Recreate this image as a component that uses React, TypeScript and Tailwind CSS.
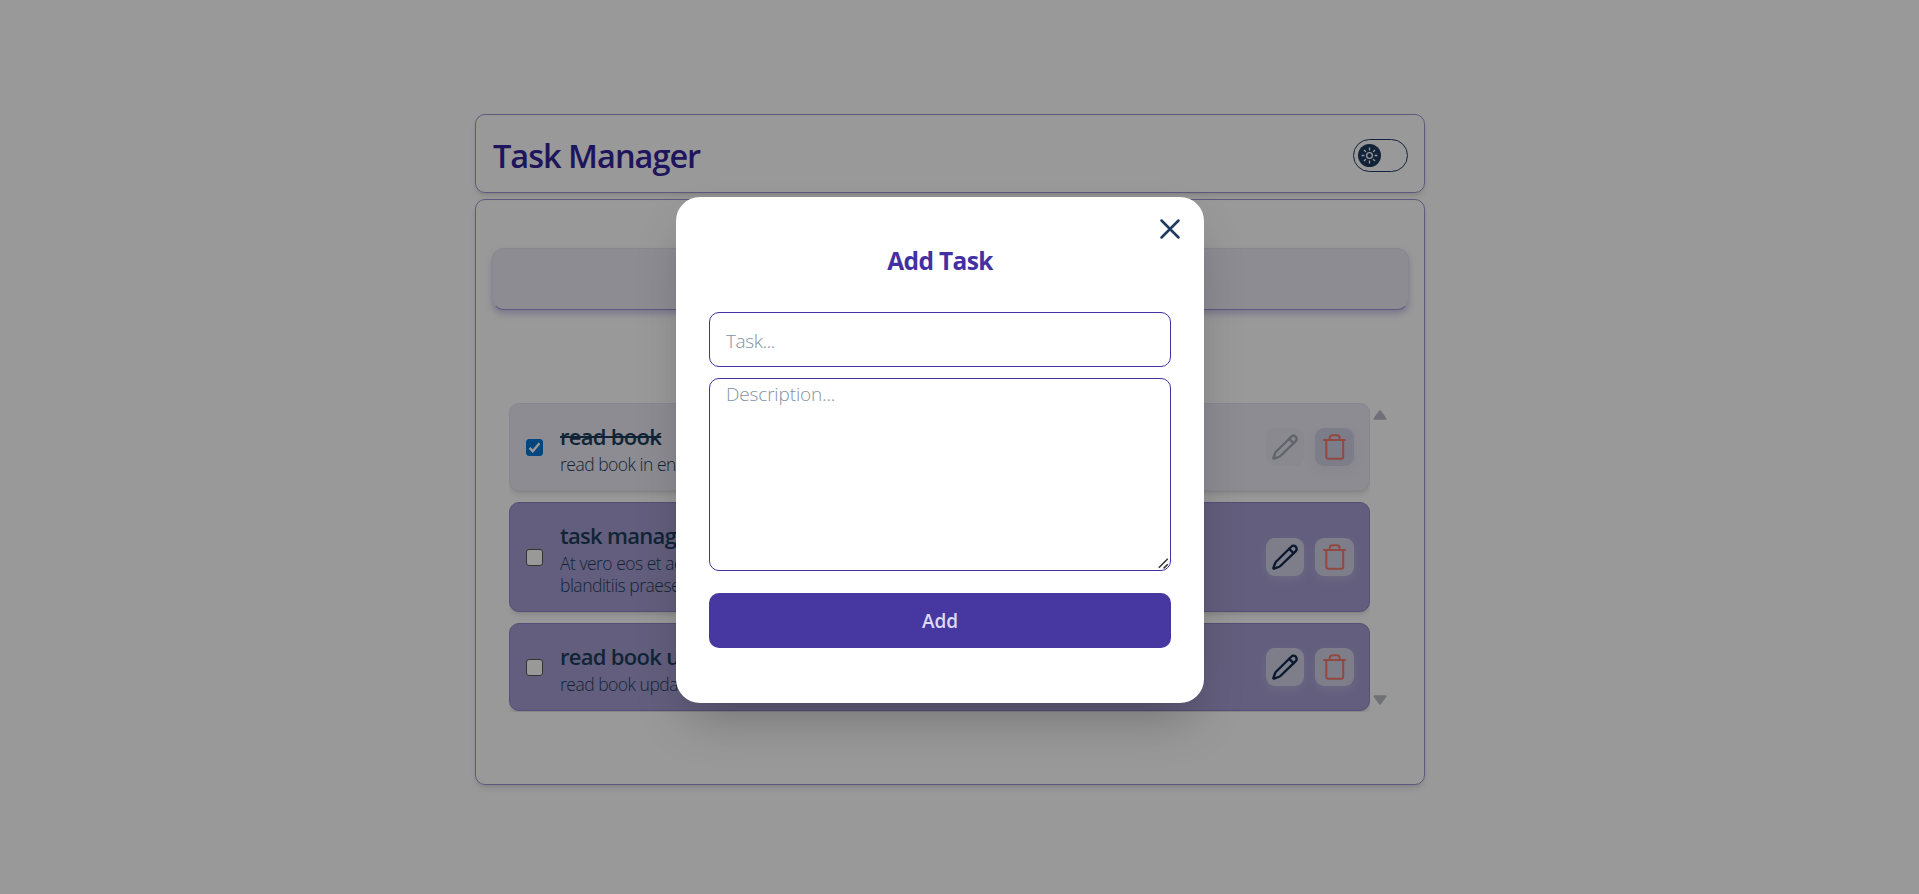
import { ReactNode } from "react";

type Task = { id: number; title: string; text: string; done: boolean };

const tasks: Task[] = [
  { id: 1, title: "read book", text: "read book in english", done: true },
  {
    id: 2,
    title: "task manager",
    text: "At vero eos et accusamus et iusto odio dignissimos ducimus qui\nblanditiis praesentium voluptatum deleniti atque",
    done: false,
  },
  { id: 3, title: "read book update", text: "read book update in english", done: false },
];

function Pencil() {
  return (
    <svg viewBox="0 0 24 24" className="size-[30px]" fill="none" stroke="currentColor" strokeWidth="1.900" strokeLinecap="round" strokeLinejoin="round">
      <path d="M20.600 7.300a2.350 2.350 0 0 0-3.600-3.500L4.800 15.800a3 3 0 0 0-.6.9l-1.500 4.100a.4.4 0 0 0 .5.500l4.200-1.500a3 3 0 0 0 .9-.6z" />
      <path d="m15.400 5.500 3.500 3.500" />
    </svg>
  );
}

function Trash() {
  return (
    <svg viewBox="0 0 30 30" className="size-[30px]" fill="none" stroke="currentColor" strokeWidth="2" strokeLinecap="round" strokeLinejoin="round">
      <path d="M4 8h21" />
      <path d="M6.300 8v16.700a2 2 0 0 0 2 2h12.900a2 2 0 0 0 2-2V8" />
      <path d="M9.700 7.500v-1.200a3 3 0 0 1 3-3h4a3 3 0 0 1 3 3v1.200" />
    </svg>
  );
}

function Sun() {
  return (
    <svg viewBox="0 0 17 17" className="size-[17px] text-white" fill="none" stroke="currentColor" strokeWidth="1.300" strokeLinecap="butt">
      <circle cx="8.5" cy="8.5" r="2.900" />
      <path d="M8.500.6v2.800M8.500 13.600v2.800M.6 8.500h2.800M13.600 8.500h2.800M3 3l1.900 1.900M12.100 12.100 14 14M3 14l1.900-1.900M12.100 4.900 14 3" />
    </svg>
  );
}

function IconButton({ children, className }: { children: ReactNode; className: string }) {
  return <button className={`flex h-[38px] items-center justify-center rounded-[9px] ${className}`}>{children}</button>;
}

function Checkbox({ checked }: { checked: boolean }) {
  return (
    <span className="relative flex size-[17px] shrink-0">
      <input
        type="checkbox"
        readOnly
        checked={checked}
        className="size-[17px] appearance-none rounded-[3px] border-[1.5px] border-[#5a554f] bg-white checked:border-[#0075d4] checked:bg-[#0075d4]"
      />
      {checked && (
        <svg viewBox="0 0 17 17" className="pointer-events-none absolute inset-0 size-[17px] text-white" fill="none" stroke="currentColor" strokeWidth="2.400">
          <path d="m3.500 8.800 3.300 3.400 6.700-8" />
        </svg>
      )}
    </span>
  );
}

function TaskCard({ task }: { task: Task }) {
  return (
    <li
      className={`flex shrink-0 items-center rounded-[10px] border pl-4 pr-[15px] shadow-md ${
        task.done ? "border-[#e3e0ee] bg-[#ebe9f3]" : "border-[#8f84c4] bg-[#a59dd1]"
      } ${task.id === 2 ? "h-[110px]" : "h-[88px]"}`}
    >
      <Checkbox checked={task.done} />
      <div className="ml-[17px] w-[560px] pt-px text-[#1c3d5a]">
        <h3 className={`text-[22px] font-semibold leading-[30px] tracking-[-0.700px] ${task.done ? "line-through" : ""}`}>{task.title}</h3>
        <p className="mt-[2px] whitespace-pre text-[17.500px] font-light leading-[22px] tracking-[-0.500px]">{task.text}</p>
      </div>
      <div className="ml-auto flex gap-[11px]">
        <IconButton className={task.done ? "w-[38px] bg-[#e6e4f1] text-[#a0a7b6]" : "w-[38px] bg-[#d3d2e8] text-[#102a4c] shadow-[0_4px_8px_#ffffff30]"}>
          <Pencil />
        </IconButton>
        <IconButton className={task.done ? "w-[39px] bg-[#d0d1e6] text-[#f0786a] shadow-[0_4px_8px_#c8c6e040]" : "w-[39px] bg-[#d3d2e8] text-[#f0786a] shadow-[0_4px_8px_#ffffff30]"}>
          <Trash />
        </IconButton>
      </div>
    </li>
  );
}

export default function App() {
  return (
    <div className="relative h-[894px] w-full overflow-hidden bg-white font-['Open_Sans','Noto_Sans',sans-serif]">
      <main className="ml-[475px] flex w-[950px] flex-col gap-[6px] pt-[114px]">
        <header className="flex h-[79px] items-center justify-between rounded-[10px] border border-[#9f93d3] px-4 shadow-md">
          <h1 className="ml-px pt-[5px] text-[32.500px] font-semibold leading-[40px] tracking-[-1px] text-[#34249a]">Task Manager</h1>
          <div className="mt-[3px] flex h-[33px] w-[55px] items-center rounded-full border border-[#1e3a5f] px-1">
            <span className="flex size-[23px] items-center justify-center rounded-full bg-[#1e3a5f]">
              <Sun />
            </span>
          </div>
        </header>
        <section className="flex h-[586px] flex-col rounded-[10px] border border-[#9f93d3] px-4 pt-12 shadow-md">
          <button className="h-[62px] w-[917px] shrink-0 rounded-xl border border-[#e3e0ee] border-b-[#9f93d3] bg-[#ebe9f3] shadow-[0_4px_6px_#9f93d380]" />
          <div className="ml-[17px] mt-[93px] flex h-[309px]">
            <ul className="flex w-[861px] flex-col gap-[11px] overflow-hidden">
              {tasks.map((task) => (
                <TaskCard key={task.id} task={task} />
              ))}
            </ul>
            <div className="ml-[3px] flex flex-col justify-between pb-[7px] pt-[7px] text-[#b9bcc6]">
              <svg viewBox="0 0 14 10" className="h-[10px] w-[14px]" fill="currentColor" stroke="currentColor" strokeWidth="2" strokeLinejoin="round"><path d="M7 1.200 12.500 8.800H1.500z" /></svg>
              <svg viewBox="0 0 14 10" className="h-[10px] w-[14px]" fill="currentColor" stroke="currentColor" strokeWidth="2" strokeLinejoin="round"><path d="M7 8.800 12.500 1.200H1.500z" /></svg>
            </div>
          </div>
        </section>
      </main>

      <div className="absolute inset-0 bg-black/40">
        <div className="ml-[676px] mt-[197px] flex h-[506px] w-[528px] flex-col rounded-3xl bg-white px-[33px] shadow-2xl">
          <button className="-mr-[12px] mt-[19px] self-end text-[#1e3a5f]">
            <svg viewBox="0 0 26 26" className="size-[26px]" fill="none" stroke="currentColor" strokeWidth="2.500" strokeLinecap="round"><path d="m4.500 4.500 17 17M21.500 4.500l-17 17" /></svg>
          </button>
          <h2 className="mt-[3px] text-center text-[24.500px] font-bold leading-8 tracking-[-0.650px] text-[#4331a3]">Add Task</h2>
          <input placeholder="Task..." className="mt-[35px] h-[55px] shrink-0 rounded-[10px] border border-[#4331a3] px-4 pt-0.5 text-[19px] font-light tracking-[-0.400px] placeholder:text-[#8492a6]" />
          <div className="relative mt-[11px] h-[193px] shrink-0">
            <textarea placeholder="Description..." className="block h-full w-full resize-none rounded-[10px] border border-[#4331a3] px-4 py-px text-[19px] font-light leading-7 tracking-[-0.150px] placeholder:text-[#8492a6]" />
            <svg viewBox="0 0 12 12" className="pointer-events-none absolute bottom-[1px] right-[1px] size-3" fill="none" stroke="#333" strokeWidth="1.500"><path d="M.8 9.800 9.800.8M5.600 10.400l4.200-4.200" /></svg>
          </div>
          <button className="mt-[22px] h-[55px] shrink-0 rounded-[10px] bg-[#4638a0] pt-0.5 text-[19px] font-semibold text-[#ddd9f5]">Add</button>
        </div>
      </div>
    </div>
  );
}
